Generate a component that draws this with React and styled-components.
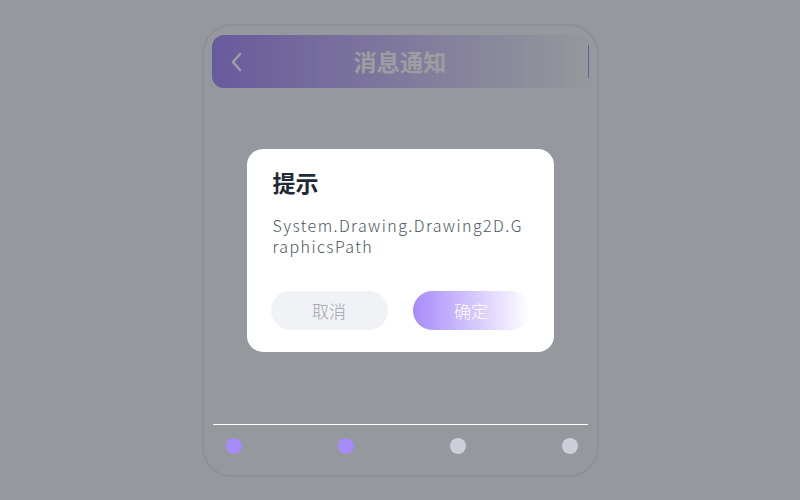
import React from "react";
import styled, { createGlobalStyle } from "styled-components";

const Global = createGlobalStyle`
  html, body { margin: 0; padding: 0; }
  body {
    width: 800px; height: 500px; overflow: hidden;
    background: #f3f4f6;
    font-family: "Noto Sans CJK SC", "Noto Sans", sans-serif;
  }
`;

const Page = styled.div`
  width: 800px;
  height: 500px;
  display: flex;
  align-items: center;
  justify-content: center;
`;

const Phone = styled.div`
  box-sizing: border-box;
  width: 397px;
  height: 453px;
  border: 2px solid #e5e7eb;
  border-radius: 30px;
  background: #f3f4f6;
  padding: 9px 8px 0 8px;
  display: flex;
  flex-direction: column;
`;

const Header = styled.div`
  position: relative;
  height: 53px;
  border-radius: 12px 0 0 12px;
  background: linear-gradient(90deg, #a78bfa 0%, rgba(167, 139, 250, 0.55) 45%, rgba(167, 139, 250, 0) 100%);
  display: flex;
  align-items: center;
  justify-content: center;
  &::after {
    content: "";
    position: absolute;
    right: 0;
    top: 10px;
    bottom: 10px;
    width: 1px;
    background: #a78bfa;
  }
`;

const Back = styled.svg`
  position: absolute;
  left: 18px;
  top: 17px;
`;

const Title = styled.div`
  color: #ffffff;
  font-size: 23px;
  font-weight: 700;
  letter-spacing: 0.3px;
`;

const Body = styled.div`
  flex: 1;
`;

const Bottom = styled.div`
  position: relative;
  z-index: 20;
  padding: 0 1px;
  height: 51px;
`;

const Divider = styled.div`
  height: 1px;
  background: #ffffff;
`;

const Dots = styled.div`
  display: flex;
  justify-content: space-between;
  padding: 13px 9px 0 13px;
`;

const Dot = styled.div`
  width: 16px;
  height: 16px;
  border-radius: 50%;
  background: ${(p) => (p.$active ? "#a78bfa" : "#cbd0d8")};
`;

const Overlay = styled.div`
  position: fixed;
  inset: 0;
  z-index: 10;
  background: rgba(20, 24, 32, 0.42);
  display: flex;
  align-items: center;
  justify-content: center;
`;

const Dialog = styled.div`
  box-sizing: border-box;
  width: 307px;
  background: #ffffff;
  border-radius: 16px;
  padding: 18px 26px 22px 26px;
  display: flex;
  flex-direction: column;
`;

const DialogTitle = styled.div`
  font-size: 23px;
  font-weight: 700;
  color: #1f2937;
  line-height: 30px;
`;

const Message = styled.div`
  margin-top: 18px;
  font-size: 16px;
  font-weight: 300;
  line-height: 21px;
  letter-spacing: 1.42px;
  color: #4b5563;
  word-break: break-all;
`;

const Actions = styled.div`
  margin: 34px -2px 0 -2px;
  display: flex;
  gap: 25px;
`;

const Button = styled.button`
  flex: 1;
  height: 39px;
  border: none;
  border-radius: 20px;
  font-family: inherit;
  font-size: 17px;
  font-weight: 300;
  color: ${(p) => (p.$primary ? "#ffffff" : "#9ca3af")};
  background: ${(p) =>
    p.$primary ? "linear-gradient(90deg, #a78bfa 0%, #ffffff 100%)" : "#f1f2f5"};
`;

export default function App() {
  return (
    <>
      <Global />
      <Page>
        <Phone>
          <Header>
            <Back width="14" height="20" viewBox="0 0 14 20" fill="none">
              <path d="M10 2 L3 10 L10 18" stroke="#ffffff" strokeWidth="2.6" strokeLinecap="round" strokeLinejoin="round" />
            </Back>
            <Title>消息通知</Title>
          </Header>
          <Body />
          <Bottom>
            <Divider />
            <Dots>
              <Dot $active />
              <Dot $active />
              <Dot />
              <Dot />
            </Dots>
          </Bottom>
        </Phone>
      </Page>
      <Overlay>
        <Dialog>
          <DialogTitle>提示</DialogTitle>
          <Message>System.Drawing.Drawing2D.GraphicsPath</Message>
          <Actions>
            <Button>取消</Button>
            <Button $primary>确定</Button>
          </Actions>
        </Dialog>
      </Overlay>
    </>
  );
}
